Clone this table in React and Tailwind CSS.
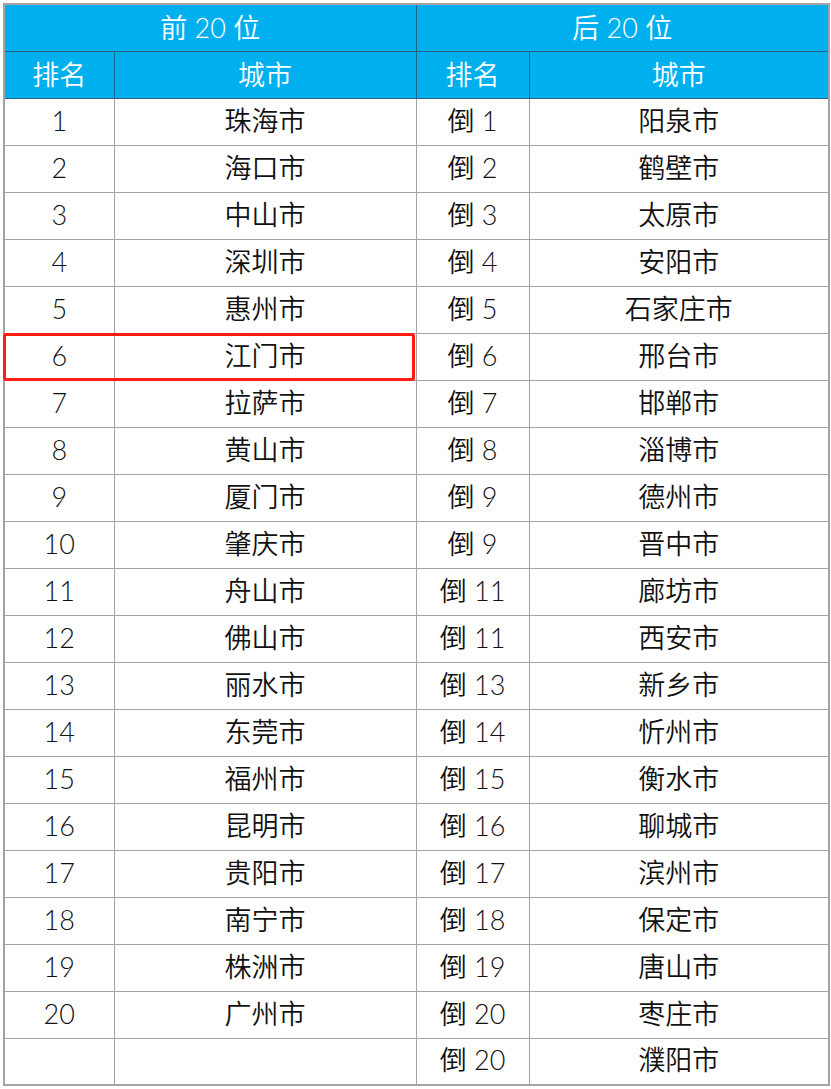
import React from "react";

const top = ["珠海市","海口市","中山市","深圳市","惠州市","江门市","拉萨市","黄山市","厦门市","肇庆市","舟山市","佛山市","丽水市","东莞市","福州市","昆明市","贵阳市","南宁市","株洲市","广州市"];
const bottom = [
  ["倒 1","阳泉市"],["倒 2","鹤壁市"],["倒 3","太原市"],["倒 4","安阳市"],["倒 5","石家庄市"],
  ["倒 6","邢台市"],["倒 7","邯郸市"],["倒 8","淄博市"],["倒 9","德州市"],["倒 9","晋中市"],
  ["倒 11","廊坊市"],["倒 11","西安市"],["倒 13","新乡市"],["倒 14","忻州市"],["倒 15","衡水市"],
  ["倒 16","聊城市"],["倒 17","滨州市"],["倒 18","保定市"],["倒 19","唐山市"],["倒 20","枣庄市"],
  ["倒 20","濮阳市"],
];

const th = "border border-[#1f6786] h-[47px] p-0 font-[350] text-white text-center";
const td = "border border-[#a3a3a3] h-[47px] p-0 pb-[3px] text-center";

const App = () => {
    return (
        <div className="bg-white w-[831px] h-[1089px] pl-[3px] pt-[3px]" style={{fontFamily: '"Lato", "Noto Sans CJK SC", sans-serif'}}>
            <div className="relative w-[825px]">
                <table className="w-[825px] table-fixed border-collapse border-2 border-[#a3a3a3] text-[27px] font-[350] leading-none text-[#111111]">
                    <colgroup>
                        <col className="w-[110px]" />
                        <col className="w-[302px]" />
                        <col className="w-[113px]" />
                        <col className="w-[300px]" />
                    </colgroup>
                    <thead className="bg-[#00b0ee]">
                        <tr>
                            <th colSpan={2} className={th}>前 20 位</th>
                            <th colSpan={2} className={th}>后 20 位</th>
                        </tr>
                        <tr>
                            <th className={th}>排名</th>
                            <th className={th}>城市</th>
                            <th className={th}>排名</th>
                            <th className={th}>城市</th>
                        </tr>
                    </thead>
                    <tbody>
                        {bottom.map((b, i) => (
                            <tr key={i}>
                                <td className={td}>{i < 20 ? i + 1 : ""}</td>
                                <td className={td}>{top[i] || ""}</td>
                                <td className={td}>{b[0]}</td>
                                <td className={td}>{b[1]}</td>
                            </tr>
                        ))}
                    </tbody>
                </table>
                <div className="absolute left-0 top-[330px] w-[412px] h-[48px] border-[3px] border-[#ff1e12] rounded-[3px] pointer-events-none" />
            </div>
        </div>
    );
};

export default App;
